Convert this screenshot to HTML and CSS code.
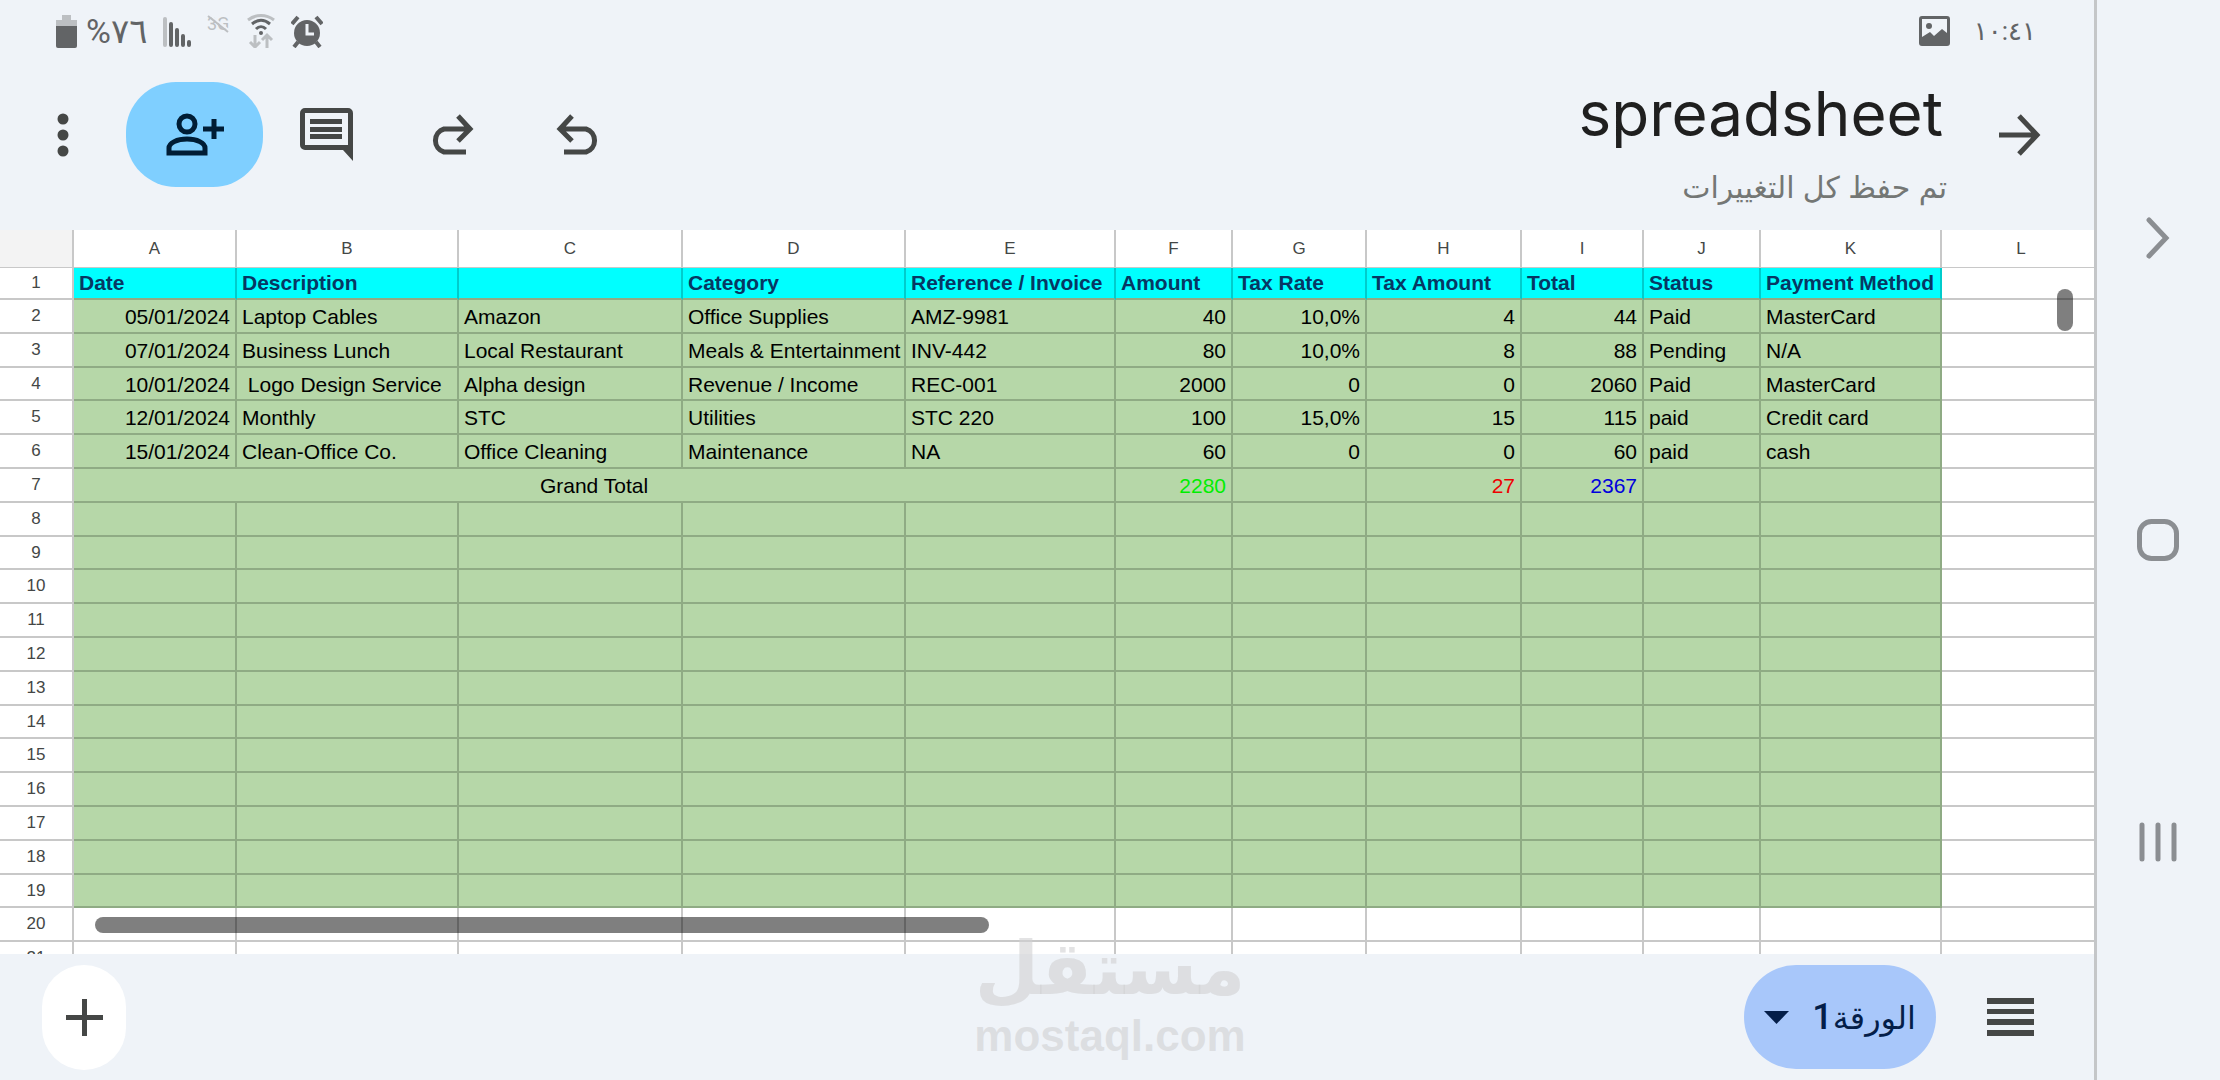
FILE: index.html
```
<!DOCTYPE html>
<html lang="ar">
<head>
    <meta charset="UTF-8">
    <meta name="viewport" content="width=device-width, initial-scale=1.0">
    <title>spreadsheet</title>
    <link rel="stylesheet" href="styles.css">
</head>
<body>

    <div class="app">
        <div class="status-bar">
            <div class="status-group">
                <div class="battery">
                    <svg width="21" height="34" viewBox="0 0 21 34">
                        <path d="M6 1h9v5h6v6H0V6h6z" fill="#bcbfc2"/>
                        <path d="M0 12h21v20a2 2 0 0 1-2 2H2a2 2 0 0 1-2-2z" fill="#626466"/>
                    </svg>
                    <span>%٧٦</span>
                </div>
                <svg width="28" height="34" viewBox="0 0 28 34" fill="none" stroke="#626466" stroke-width="4" stroke-linecap="round">
                    <path d="M2 5v26" stroke="#bcbfc2"/>
                    <path d="M8 10v21M14 16v15M20 22v9M26 28v3"/>
                </svg>
                <svg width="24" height="34" viewBox="0 0 24 34">
                    <text class="no-signal" x="0" y="16">3G</text>
                    <path d="M3 1l20 16" stroke="#eff3f8" stroke-width="2"/>
                    <path d="M1 2l20 16" stroke="#bcbfc2" stroke-width="2"/>
                </svg>
                <svg width="28" height="34" viewBox="0 0 28 34" fill="none" stroke="#626466" stroke-width="3">
                    <path d="M1 6c8-6 18-6 26 0" stroke="#bcbfc2"/>
                    <path d="M5 10c6-5 12-5 18 0M9 15c3-3 7-3 10 0"/>
                    <circle cx="14" cy="19" r="2" fill="#626466" stroke="none"/>
                    <path d="M8 21v11M3 28l5 5 5-5M20 34V22M15 26l5-5 5 5" stroke="#bcbfc2"/>
                </svg>
                <svg width="32" height="34" viewBox="0 0 32 34" fill="none" stroke="#626466" stroke-width="4">
                    <path d="M1 10l6-7M31 10l-6-7M7 28l-4 5M25 28l4 5"/>
                    <circle cx="16" cy="19" r="13" fill="#626466" stroke="none"/>
                    <path d="M16 10v10h7" stroke="#eff3f8" stroke-width="3"/>
                </svg>
            </div>
            <div class="status-group">
                <svg width="31" height="30" viewBox="0 0 31 30" fill="#626466">
                    <path fill-rule="evenodd" d="M3 0h25a3 3 0 0 1 3 3v24a3 3 0 0 1-3 3H3a3 3 0 0 1-3-3V3a3 3 0 0 1 3-3zM3 3v18l8-5 4 4 8-7 5 4V3z"/>
                    <circle cx="10" cy="10" r="3"/>
                </svg>
                <span class="clock">١٠:٤١</span>
            </div>
        </div>

        <header class="toolbar" dir="rtl">
            <button class="back" aria-label="رجوع">
                <svg width="42" height="42" viewBox="0 0 42 42" fill="none" stroke="#454746" stroke-width="5">
                    <path d="M0 21h38M20 2l18 19-18 19"/>
                </svg>
            </button>
            <div class="heading">
                <h1>spreadsheet</h1>
                <p>تم حفظ كل التغييرات</p>
            </div>
            <button class="action" aria-label="تراجع">
                <svg width="44" height="42" viewBox="0 0 44 42" fill="none" stroke="#454746" stroke-width="5">
                    <path d="M16 2L4 15l12 12M4 15h26a12 12 0 0 1 0 23H8"/>
                </svg>
            </button>
            <button class="action" aria-label="إعادة">
                <svg width="44" height="42" viewBox="0 0 44 42" fill="none" stroke="#454746" stroke-width="5">
                    <path d="M28 2l12 13-12 12M40 15H14a12 12 0 0 0 0 23h22"/>
                </svg>
            </button>
            <button class="action" aria-label="تعليق">
                <svg width="53" height="53" viewBox="0 0 53 53" fill="#454746">
                    <path fill-rule="evenodd" d="M5 0h43a5 5 0 0 1 5 5v48L43 42H5a5 5 0 0 1-5-5V5a5 5 0 0 1 5-5zM5 5v32h43V5z"/>
                    <path d="M10 11h32v5H10zM10 19h32v5H10zM10 26h32v5H10z"/>
                </svg>
            </button>
            <button class="action share" aria-label="مشاركة">
                <svg width="58" height="43" viewBox="0 0 58 43" fill="none" stroke="#001d35" stroke-width="5">
                    <circle cx="21" cy="11" r="8"/>
                    <path d="M3 40v-5c0-5 8-9 18-9s18 4 18 9v5zM37 16h21M48 6v20"/>
                </svg>
            </button>
            <button class="action" aria-label="المزيد">
                <svg width="12" height="44" viewBox="0 0 12 44" fill="#454746">
                    <circle cx="6" cy="6" r="5.5"/>
                    <circle cx="6" cy="22" r="5.5"/>
                    <circle cx="6" cy="38" r="5.5"/>
                </svg>
            </button>
        </header>

        <main class="grid">
            <table>
                <colgroup>
                    <col class="col-num"><col class="col-a"><col class="col-b"><col class="col-c">
                    <col class="col-d"><col class="col-e"><col class="col-f"><col class="col-g">
                    <col class="col-h"><col class="col-i"><col class="col-j"><col class="col-k"><col>
                </colgroup>
                <thead>
                    <tr><th></th><th>A</th><th>B</th><th>C</th><th>D</th><th>E</th><th>F</th><th>G</th><th>H</th><th>I</th><th>J</th><th>K</th><th>L</th></tr>
                </thead>
                <tbody>
                    <tr class="titles"><th>1</th><td>Date</td><td>Description</td><td></td><td>Category</td><td>Reference / Invoice</td><td>Amount</td><td>Tax Rate</td><td>Tax Amount</td><td>Total</td><td>Status</td><td>Payment Method</td><td></td></tr>
                    <tr class="fill"><th>2</th><td class="num">05/01/2024</td><td>Laptop Cables</td><td>Amazon</td><td>Office Supplies</td><td>AMZ-9981</td><td class="num">40</td><td class="num">10,0%</td><td class="num">4</td><td class="num">44</td><td>Paid</td><td>MasterCard</td><td></td></tr>
                    <tr class="fill"><th>3</th><td class="num">07/01/2024</td><td>Business Lunch</td><td>Local Restaurant</td><td>Meals &amp; Entertainment</td><td>INV-442</td><td class="num">80</td><td class="num">10,0%</td><td class="num">8</td><td class="num">88</td><td>Pending</td><td>N/A</td><td></td></tr>
                    <tr class="fill"><th>4</th><td class="num">10/01/2024</td><td>&nbsp;Logo Design Service</td><td>Alpha design</td><td>Revenue / Income</td><td>REC-001</td><td class="num">2000</td><td class="num">0</td><td class="num">0</td><td class="num">2060</td><td>Paid</td><td>MasterCard</td><td></td></tr>
                    <tr class="fill"><th>5</th><td class="num">12/01/2024</td><td>Monthly</td><td>STC</td><td>Utilities</td><td>STC 220</td><td class="num">100</td><td class="num">15,0%</td><td class="num">15</td><td class="num">115</td><td>paid</td><td>Credit card</td><td></td></tr>
                    <tr class="fill"><th>6</th><td class="num">15/01/2024</td><td>Clean-Office Co.</td><td>Office Cleaning</td><td>Maintenance</td><td>NA</td><td class="num">60</td><td class="num">0</td><td class="num">0</td><td class="num">60</td><td>paid</td><td>cash</td><td></td></tr>
                    <tr class="fill"><th>7</th><td class="merged" colspan="5">Grand Total</td><td class="num green">2280</td><td></td><td class="num red">27</td><td class="num blue">2367</td><td></td><td></td><td></td></tr>
                    <tr class="fill"><th>8</th><td></td><td></td><td></td><td></td><td></td><td></td><td></td><td></td><td></td><td></td><td></td><td></td></tr>
                    <tr class="fill"><th>9</th><td></td><td></td><td></td><td></td><td></td><td></td><td></td><td></td><td></td><td></td><td></td><td></td></tr>
                    <tr class="fill"><th>10</th><td></td><td></td><td></td><td></td><td></td><td></td><td></td><td></td><td></td><td></td><td></td><td></td></tr>
                    <tr class="fill"><th>11</th><td></td><td></td><td></td><td></td><td></td><td></td><td></td><td></td><td></td><td></td><td></td><td></td></tr>
                    <tr class="fill"><th>12</th><td></td><td></td><td></td><td></td><td></td><td></td><td></td><td></td><td></td><td></td><td></td><td></td></tr>
                    <tr class="fill"><th>13</th><td></td><td></td><td></td><td></td><td></td><td></td><td></td><td></td><td></td><td></td><td></td><td></td></tr>
                    <tr class="fill"><th>14</th><td></td><td></td><td></td><td></td><td></td><td></td><td></td><td></td><td></td><td></td><td></td><td></td></tr>
                    <tr class="fill"><th>15</th><td></td><td></td><td></td><td></td><td></td><td></td><td></td><td></td><td></td><td></td><td></td><td></td></tr>
                    <tr class="fill"><th>16</th><td></td><td></td><td></td><td></td><td></td><td></td><td></td><td></td><td></td><td></td><td></td><td></td></tr>
                    <tr class="fill"><th>17</th><td></td><td></td><td></td><td></td><td></td><td></td><td></td><td></td><td></td><td></td><td></td><td></td></tr>
                    <tr class="fill"><th>18</th><td></td><td></td><td></td><td></td><td></td><td></td><td></td><td></td><td></td><td></td><td></td><td></td></tr>
                    <tr class="fill"><th>19</th><td></td><td></td><td></td><td></td><td></td><td></td><td></td><td></td><td></td><td></td><td></td><td></td></tr>
                    <tr><th>20</th><td></td><td></td><td></td><td></td><td></td><td></td><td></td><td></td><td></td><td></td><td></td><td></td></tr>
                    <tr><th>21</th><td></td><td></td><td></td><td></td><td></td><td></td><td></td><td></td><td></td><td></td><td></td><td></td></tr>
                </tbody>
            </table>
            <div class="scroll-x"></div>
            <div class="scroll-y"></div>
        </main>

        <footer class="sheet-bar" dir="rtl">
            <button class="all-sheets" aria-label="كل الأوراق">
                <svg width="47" height="38" viewBox="0 0 47 38" fill="#454746">
                    <path d="M0 0h47v6H0zM0 11h47v5H0zM0 21h47v6H0zM0 32h47v6H0z"/>
                </svg>
            </button>
            <button class="sheet-tab">
                <span>الورقة<b>1</b></span>
                <svg width="25" height="13" viewBox="0 0 25 13" fill="#041e49"><path d="M0 0h25L12.500 13z"/></svg>
            </button>
            <button class="add-sheet" aria-label="إضافة ورقة">
                <svg width="37" height="37" viewBox="0 0 37 37" stroke="#454746" stroke-width="5">
                    <path d="M0 18.500h37M18.500 0v37"/>
                </svg>
            </button>
        </footer>

        <div class="watermark">
            <span class="watermark-ar" lang="ar">مستقل</span>
            <span class="watermark-en">mostaql.com</span>
        </div>
    </div>

    <nav class="system-nav">
        <button aria-label="رجوع">
            <svg width="24" height="42" viewBox="0 0 24 42" fill="none" stroke="#8b8e92" stroke-width="5" stroke-linecap="round">
                <path d="M3 3l17 18L3 39"/>
            </svg>
        </button>
        <button aria-label="الرئيسية">
            <svg width="42" height="42" viewBox="0 0 42 42" fill="none" stroke="#8b8e92" stroke-width="5">
                <rect x="2.500" y="2.500" width="37" height="37" rx="12"/>
            </svg>
        </button>
        <button aria-label="التطبيقات الأخيرة">
            <svg width="38" height="40" viewBox="0 0 38 40" stroke="#8b8e92" stroke-width="5" stroke-linecap="round">
                <path d="M3 3v34M19 3v34M35 3v34"/>
            </svg>
        </button>
    </nav>

</body>
</html>
```
FILE: styles.css
```
* {
    box-sizing: border-box;
}
body {
    margin: 0;
    height: 100vh;
    display: flex;
    overflow: hidden;
    background-color: #eff3f8;
    color: #1f1f1f;
    font-family: "Liberation Sans", "Noto Sans", "DejaVu Sans", sans-serif;
}
button {
    display: flex;
    align-items: center;
    justify-content: center;
    padding: 0;
    border: none;
    background: none;
    font-family: inherit;
    cursor: pointer;
}
svg {
    display: block;
    flex: none;
}
.app {
    flex: 1;
    min-width: 0;
    display: flex;
    flex-direction: column;
    position: relative;
}

/* phone status bar */
.status-bar {
    height: 62px;
    padding: 0 58px 0 56px;
    display: flex;
    align-items: center;
    justify-content: space-between;
    color: #626466;
    font-family: Roboto, "DejaVu Sans", sans-serif;
    font-size: 34px;
    line-height: 34px;
}
.status-group {
    display: flex;
    align-items: center;
    gap: 16px;
}
.status-group:last-child {
    gap: 24px;
}
.battery {
    display: flex;
    align-items: center;
    gap: 9px;
}
.clock {
    font-size: 26px;
}
.no-signal {
    font-size: 18px;
    fill: #bcbfc2;
}

/* title and actions */
.toolbar {
    height: 168px;
    padding: 20px 53px 0 0;
    display: flex;
    align-items: flex-start;
}
.back {
    height: 105px;
}
.heading {
    flex: 1;
    padding-right: 52px;
}
.heading h1 {
    margin: 0 4px 0 0;
    font-family: Inter, Roboto, sans-serif;
    font-size: 62px;
    font-weight: 400;
    line-height: 64px;
}
.heading p {
    margin: 22px 0 0;
    color: #747775;
    font-size: 30px;
    line-height: 40px;
}
.action {
    width: 126px;
    height: 105px;
}
.share {
    width: 137px;
    border-radius: 50px;
    background-color: #7fcfff;
}

/* spreadsheet */
.grid {
    flex: 1;
    min-height: 0;
    position: relative;
    overflow: hidden;
    background-color: #fff;
}
table {
    width: calc(100% + 8px);
    table-layout: fixed;
    border-collapse: separate;
    border-spacing: 0;
    font-size: 21px;
    line-height: 24px;
}
.col-num { width: 74px; }
.col-a { width: 163px; }
.col-b { width: 222px; }
.col-c { width: 224px; }
.col-d { width: 223px; }
.col-e { width: 210px; }
.col-f { width: 117px; }
.col-g { width: 134px; }
.col-h { width: 155px; }
.col-i { width: 122px; }
.col-j { width: 117px; }
.col-k { width: 181px; }
th, td {
    padding: 0 5px;
    border: 0 solid #c8c8c8;
    border-width: 0 2px 2px 0;
    white-space: nowrap;
}
th {
    color: #444746;
    font-size: 17px;
    font-weight: 400;
    text-align: center;
}
td {
    color: #000;
}
thead tr {
    height: 38px;
}
thead th {
    border-bottom-width: 1px;
}
thead th:first-child {
    background-color: #f3f3f3;
}
tbody tr {
    height: 34px;
}
tbody tr:nth-child(5n+4) {
    height: 33px;
}
tbody .titles {
    height: 32px;
}
.titles td:not(:last-child) {
    background-color: #00ffff;
    border-color: #00cccc;
    border-bottom-color: #8fab84;
    color: #073763;
    font-weight: 700;
}
.fill td {
    padding-top: 2px;
}
.fill td:not(:last-child) {
    background-color: #b6d7a8;
    border-color: #8fab84;
}
.num {
    text-align: right;
}
.merged {
    text-align: center;
}
.fill .green { color: #00ee00; }
.fill .red { color: #ee0000; }
.fill .blue { color: #0000dd; }
.scroll-x,
.scroll-y {
    position: absolute;
    border-radius: 8px;
    background-color: rgba(0, 0, 0, 0.5);
}
.scroll-x {
    left: 95px;
    bottom: 21px;
    width: 894px;
    height: 16px;
}
.scroll-y {
    top: 59px;
    right: 21px;
    width: 16px;
    height: 42px;
}

/* sheet tabs */
.sheet-bar {
    height: 126px;
    padding: 0 60px 0 42px;
    display: flex;
    align-items: center;
}
.sheet-tab {
    width: 192px;
    height: 104px;
    margin-right: 51px;
    gap: 23px;
    border-radius: 52px;
    background-color: #a8c7fa;
    color: #041e49;
    font-size: 32px;
}
.sheet-tab b {
    font-family: Roboto, sans-serif;
    font-size: 36px;
    font-weight: 500;
}
.add-sheet {
    width: 84px;
    height: 105px;
    margin-right: auto;
    border-radius: 42px;
    background-color: #fff;
}

/* watermark over the bottom edge */
.watermark {
    position: absolute;
    left: 977px;
    bottom: 20px;
    width: 266px;
    display: flex;
    flex-direction: column;
    align-items: center;
    color: rgba(208, 208, 210, 0.6);
    font-weight: 700;
    pointer-events: none;
}
.watermark-ar {
    font-family: "DejaVu Sans", sans-serif;
    font-size: 74px;
    line-height: 88px;
}
.watermark-en {
    font-size: 44px;
    line-height: 48px;
}

/* android navigation */
.system-nav {
    width: 126px;
    padding-right: 2px;
    display: flex;
    flex-direction: column;
    justify-content: center;
    border-left: 3px solid #c4c6c8;
}
.system-nav button {
    width: 100%;
    height: 302px;
}
```
